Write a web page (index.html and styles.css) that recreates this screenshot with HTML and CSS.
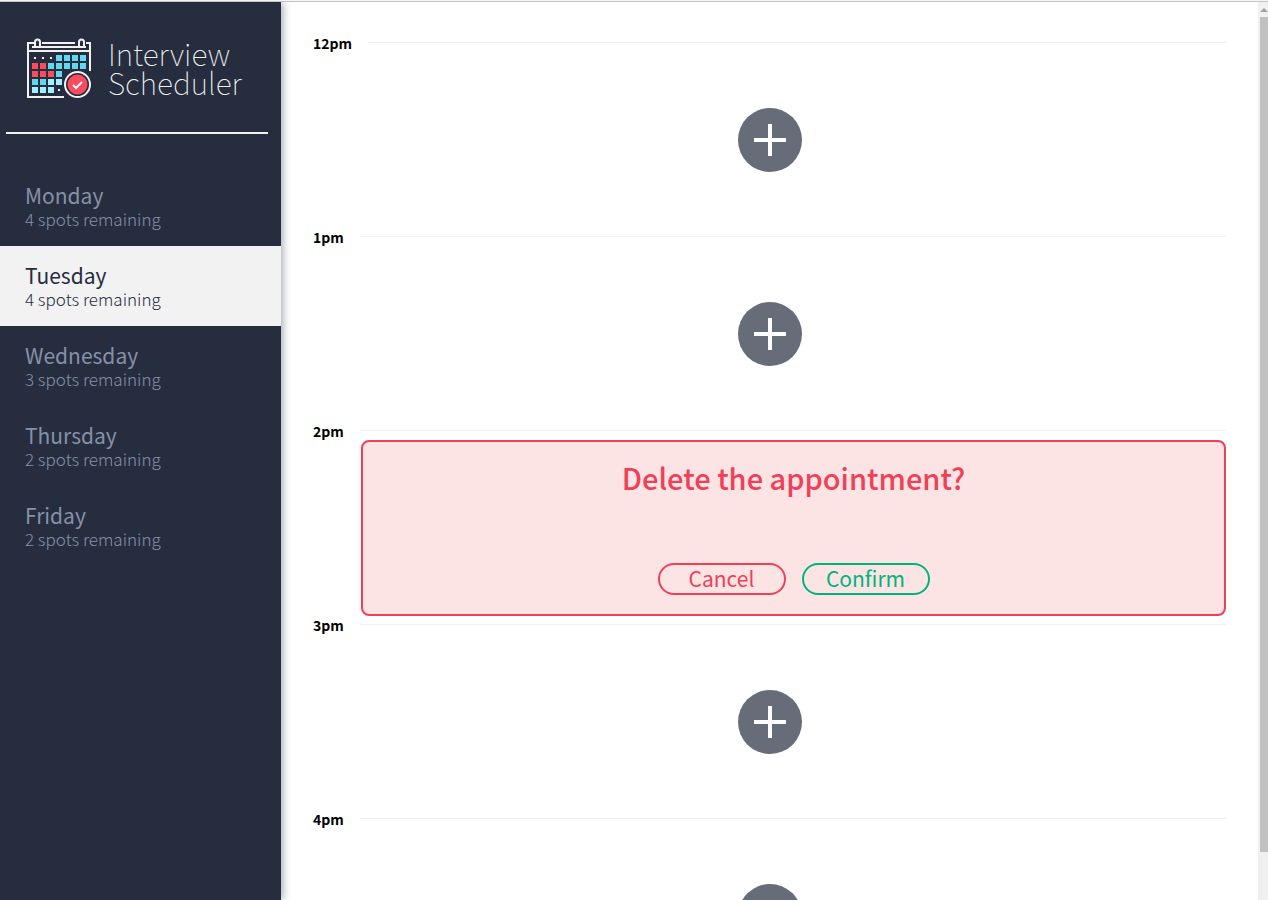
FILE: index.html
```html
<!DOCTYPE html>
<html lang="en">
<head>
<meta charset="utf-8">
<title>Interview Scheduler</title>
<link rel="stylesheet" href="styles.css">
</head>
<body>
<main class="layout">
  <aside class="sidebar">
    <div class="brand">
      <svg class="brand-icon" width="66" height="62" viewBox="0 0 66 62" aria-hidden="true">
        <g fill="none" stroke="#f2f2f2" stroke-width="2">
          <path d="M8 6H2V60H38M16 6H49M60 6H64V34M2 14H64"/>
          <path d="M6 10H60"/>
          <path d="M9 10V5a2.500 2.500 0 0 1 5 0V10M53 10V5a2.500 2.500 0 0 1 5 0V10"/>
        </g>
        <path fill="#f2f2f2" d="M8 20h2v2h-2zM16 20h2v2h-2zM24 20h2v2h-2zM32 52h2v2h-2z"/>
        <path fill="#5fd9f0" d="M30 18h6v6h-6zM38 18h6v6h-6zM46 18h6v6h-6zM54 18h6v6h-6zM22 26h6v6h-6zM30 26h6v6h-6zM38 26h6v6h-6zM46 26h6v6h-6zM54 26h6v6h-6zM30 34h6v6h-6zM6 42h6v6h-6zM14 42h6v6h-6z"/>
        <path fill="#fd4b5e" d="M6 26h6v6h-6zM14 26h6v6h-6zM6 34h6v6h-6zM14 34h6v6h-6zM22 34h6v6h-6z"/>
        <path fill="#a4f0fb" d="M22 42h6v6h-6zM30 42h6v6h-6zM6 50h6v6h-6zM14 50h6v6h-6zM22 50h6v6h-6z"/>
        <circle cx="51.500" cy="47.500" r="14" fill="#262d3f"/>
        <circle cx="51.500" cy="47.500" r="12.500" fill="#262d3f" stroke="#f2f2f2" stroke-width="2"/>
        <circle cx="51.500" cy="47.500" r="10" fill="#fd4b5e"/>
        <path d="M47 48l3 3 6-6" fill="none" stroke="#fff" stroke-width="2"/>
      </svg>
      <h1 class="brand-name">Interview<br>Scheduler</h1>
    </div>
    <hr class="divider">
    <nav>
      <ul class="days">
        <li><button type="button" class="day"><span class="day-name">Monday</span><span class="day-spots">4 spots remaining</span></button></li>
        <li><button type="button" class="day day-selected"><span class="day-name">Tuesday</span><span class="day-spots">4 spots remaining</span></button></li>
        <li><button type="button" class="day"><span class="day-name">Wednesday</span><span class="day-spots">3 spots remaining</span></button></li>
        <li><button type="button" class="day"><span class="day-name">Thursday</span><span class="day-spots">2 spots remaining</span></button></li>
        <li><button type="button" class="day"><span class="day-name">Friday</span><span class="day-spots">2 spots remaining</span></button></li>
      </ul>
    </nav>
  </aside>
  <section class="schedule">
    <article class="slot">
      <header class="slot-header"><h2 class="time">12pm</h2><hr class="rule"></header>
      <div class="slot-body"><button type="button" class="add" aria-label="Add appointment"><svg width="32" height="32" viewBox="0 0 32 32" aria-hidden="true"><path d="M14 0h4v14h14v4H18v14h-4V18H0v-4h14z" fill="#fff"/></svg></button></div>
    </article>
    <article class="slot">
      <header class="slot-header"><h2 class="time">1pm</h2><hr class="rule"></header>
      <div class="slot-body"><button type="button" class="add" aria-label="Add appointment"><svg width="32" height="32" viewBox="0 0 32 32" aria-hidden="true"><path d="M14 0h4v14h14v4H18v14h-4V18H0v-4h14z" fill="#fff"/></svg></button></div>
    </article>
    <article class="slot">
      <header class="slot-header"><h2 class="time">2pm</h2><hr class="rule"></header>
      <div class="confirm">
        <h3 class="confirm-title">Delete the appointment?</h3>
        <div class="actions">
          <button type="button" class="button button-danger">Cancel</button>
          <button type="button" class="button button-success">Confirm</button>
        </div>
      </div>
    </article>
    <article class="slot">
      <header class="slot-header"><h2 class="time">3pm</h2><hr class="rule"></header>
      <div class="slot-body"><button type="button" class="add" aria-label="Add appointment"><svg width="32" height="32" viewBox="0 0 32 32" aria-hidden="true"><path d="M14 0h4v14h14v4H18v14h-4V18H0v-4h14z" fill="#fff"/></svg></button></div>
    </article>
    <article class="slot">
      <header class="slot-header"><h2 class="time">4pm</h2><hr class="rule"></header>
      <div class="slot-body"><button type="button" class="add" aria-label="Add appointment"><svg width="32" height="32" viewBox="0 0 32 32" aria-hidden="true"><path d="M14 0h4v14h14v4H18v14h-4V18H0v-4h14z" fill="#fff"/></svg></button></div>
    </article>
  </section>
  <div class="scrollbar" aria-hidden="true">
    <span class="scroll-arrow"></span>
    <span class="scroll-thumb"></span>
  </div>
</main>
</body>
</html>
```
FILE: styles.css
```css
* {
  box-sizing: border-box;
}

body {
  display: flex;
  flex-direction: column;
  height: 100vh;
  margin: 0;
  padding-top: 1px;
  font-family: "Noto Sans CJK SC", "Noto Sans", sans-serif;
  background: #f6f6f6;
  color: #000;
}

button {
  font: inherit;
  cursor: pointer;
}

h1, h2, h3, ul, hr {
  margin: 0;
  padding: 0;
}

.layout {
  display: flex;
  flex: 1;
  min-height: 0;
  overflow: hidden;
  border-top: 1px solid #c3c3c3;
  background: #fff;
}

.sidebar {
  flex: 0 0 281px;
  background: #262d3f;
  box-shadow: 2px 0 8px rgba(39, 45, 63, 0.4);
}

.brand {
  display: flex;
  gap: 16px;
  align-items: center;
  padding: 32px 0 0 26px;
  height: 100px;
}

.brand-icon {
  flex: none;
}

.brand-name {
  font-size: 30px;
  font-weight: 100;
  line-height: 29px;
  color: #f2f2f2;
}

.divider {
  height: 2px;
  border: 0;
  margin: 30px 13px 32px 6px;
  background: #f2f2f2;
}

.days {
  list-style: none;
}

.day {
  display: flex;
  flex-direction: column;
  width: 100%;
  height: 80px;
  padding: 17px 25px;
  border: 0;
  background: none;
  text-align: left;
  color: #8691a7;
}

.day-name {
  font-size: 21px;
  line-height: 24px;
}

.day-spots {
  font-size: 17px;
  font-weight: 300;
  line-height: 24px;
}

.day-selected {
  background: #f2f2f2;
  color: #262d3f;
}

.schedule {
  flex: 1;
  min-width: 0;
  padding: 32px 32px 0;
}

.slot-header {
  display: flex;
  align-items: center;
  gap: 16px;
  height: 18px;
}

.time {
  font-size: 14px;
  font-weight: 700;
  line-height: 18px;
}

.rule {
  flex: 1;
  height: 1px;
  border: 0;
  margin-bottom: 2px;
  background: #f0f0f0;
}

.slot-body {
  display: flex;
  align-items: center;
  justify-content: center;
  height: 176px;
}

.add {
  display: grid;
  place-items: center;
  width: 64px;
  height: 64px;
  padding: 0;
  border: 0;
  border-radius: 50%;
  background: #666c78;
}

.confirm {
  display: flex;
  flex-direction: column;
  align-items: center;
  justify-content: space-between;
  height: 176px;
  margin-left: 48px;
  padding: 15px 0 19px;
  border: 2px solid #ef4057;
  border-radius: 8px;
  background: #fce4e4;
}

.confirm-title {
  font-size: 29px;
  font-weight: 500;
  line-height: 40px;
  color: #ef4057;
}

.actions {
  display: flex;
  gap: 16px;
}

.button {
  width: 128px;
  height: 32px;
  padding: 0 0 2px;
  border: 2px solid;
  border-radius: 16px;
  background: none;
  font-size: 21px;
  line-height: 24px;
}

.button-danger {
  color: #ef4057;
}

.button-success {
  color: #00b37d;
}

.scrollbar {
  flex: 0 0 10px;
  display: flex;
  flex-direction: column;
  align-items: flex-end;
  background: #f0f0f0;
}

.scroll-arrow {
  flex: 0 0 15px;
  width: 8px;
}

.scroll-arrow::before {
  content: "";
  display: block;
  margin-top: 6px;
  border: 4px solid transparent;
  border-top: 0;
  border-bottom-color: #a3a3a3;
}

.scroll-thumb {
  width: 8px;
  height: 93%;
  background: #c1c1c1;
}
```
